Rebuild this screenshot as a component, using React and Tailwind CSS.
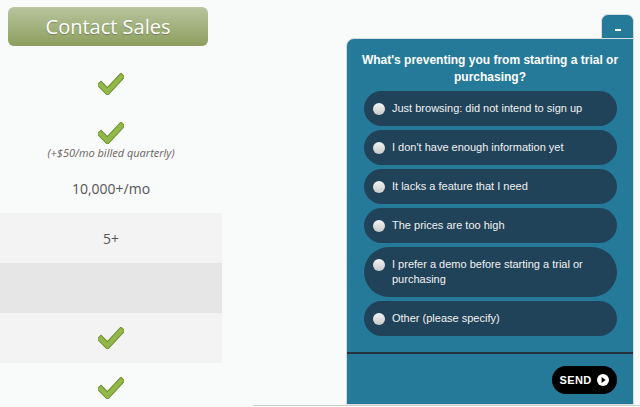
const Check = () => (
  <svg width="26" height="22" viewBox="0 0 26 22">
    <polyline points="3,12 9.5,18.5 23,4" fill="none" stroke="#6e8f2e" strokeWidth="6.5" strokeLinecap="square" />
    <polyline points="3,12 9.5,18.5 23,4" fill="none" stroke="#93b84a" strokeWidth="4.5" strokeLinecap="square" />
  </svg>
);

const options = [
  'Just browsing: did not intend to sign up',
  "I don't have enough information yet",
  'It lacks a feature that I need',
  'The prices are too high',
  'I prefer a demo before starting a trial or purchasing',
  'Other (please specify)'
];

const App = () => {
  return (
    <div className="relative w-[640px] h-[407px] overflow-hidden bg-[#f9fafa] font-['Open_Sans',sans-serif]">
      {/* pricing column */}
      <div className="w-[222px] flex flex-col">
        <div className="pt-[7px] pl-[8px]">
          <div className="w-[200px] h-[39px] rounded-[6px] bg-gradient-to-b from-[#b8c59e] to-[#8d9f5e] flex items-center justify-center text-white text-[20px] [text-shadow:0_1px_1px_rgba(0,0,0,0.25)]">
            Contact Sales
          </div>
        </div>
        <div className="h-[75px] flex items-center justify-center">
          <Check />
        </div>
        <div className="h-[42px] flex flex-col items-center pt-[1px]">
          <Check />
          <span className="text-[11px] italic text-[#6b655d] leading-[14px] mt-[2px]">(+$50/mo billed quarterly)</span>
        </div>
        <div className="h-[50px] flex items-center justify-center text-[14px] text-[#555]">10,000+/mo</div>
        <div className="h-[50px] flex items-center justify-center text-[14px] text-[#555] bg-[#f3f3f3]">5+</div>
        <div className="h-[50px] bg-[#e6e6e6]" />
        <div className="h-[50px] flex items-center justify-center bg-[#f3f3f3]">
          <Check />
        </div>
        <div className="h-[50px] flex items-center justify-center">
          <Check />
        </div>
      </div>

      <div className="absolute left-[253px] top-[405px] w-[387px] h-[1px] bg-[#cfcfcf]" />

      {/* survey widget */}
      <div className="absolute left-[601px] top-[14px] w-[33px] h-[29px] rounded-t-[7px] bg-[#267a99] border border-b-0 border-[#d3dcdf] flex justify-center pt-[14px]">
        <span className="block w-[6px] h-[2px] bg-white" />
      </div>
      <div className="absolute left-[346px] top-[38px] w-[288px] h-[367px] rounded-tl-[8px] bg-[#267a99] border border-[#d3dcdf] font-['Liberation_Sans',Arial,sans-serif]">
        <div className="absolute right-0 top-0 w-[31px] h-[3px] bg-[#267a99]" />
        <div className="pt-[13px] px-[14px] text-center text-white font-bold text-[12px] leading-[17px]">
          What's preventing you from starting a trial or purchasing?
        </div>
        <div className="mt-[5px] pl-[17px] pr-[16px] flex flex-col gap-[4px]">
          {options.map((o, i) => (
            <div
              key={i}
              className={`flex items-start rounded-full bg-[#21435a] pl-[9px] pr-[24px] ${i === 4 ? 'py-[10px]' : 'py-[10px] h-[35px]'}`}
            >
              <span className="mt-[2px] shrink-0 w-[12px] h-[12px] rounded-full bg-gradient-to-b from-[#f4f4f4] to-[#c9c9c9]" />
              <span className="ml-[7px] text-[11px] leading-[15px] text-[#f1f1f1]">{o}</span>
            </div>
          ))}
        </div>
        <div className="mt-[16px] h-[2px] bg-[#24333c]" />
        <div className="flex justify-end pr-[16px] pt-[12px]">
          <div className="w-[65px] h-[28px] rounded-full bg-black flex items-center justify-center gap-[6px]">
            <span className="text-white font-bold text-[11px] tracking-[0.3px]">SEND</span>
            <svg width="12" height="12" viewBox="0 0 12 12">
              <circle cx="6" cy="6" r="6" fill="#fff" />
              <polygon points="4.6,3 8.6,6 4.6,9" fill="#000" />
            </svg>
          </div>
        </div>
      </div>
    </div>
  );
};

export default App;
